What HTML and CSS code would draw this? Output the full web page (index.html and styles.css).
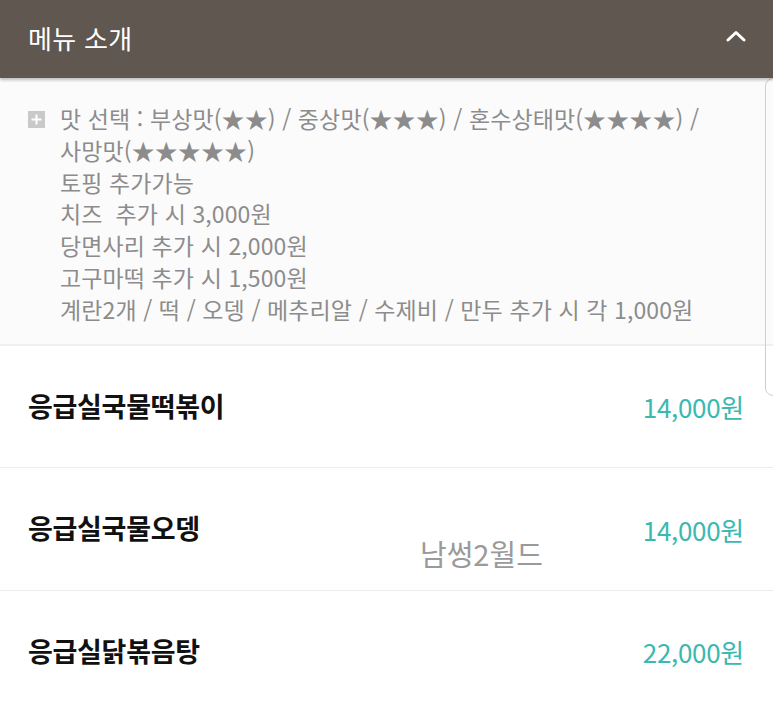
FILE: index.html
```html
<!DOCTYPE html>
<html lang="ko">
<head>
<meta charset="utf-8">
<link rel="stylesheet" href="styles.css">
</head>
<body>
<div class="page">
  <header class="bar">
    <span class="bar-title">메뉴 소개</span>
    <svg class="chev" width="20" height="12" viewBox="0 0 20 12"><path d="M2 10 L10 2.5 L18 10" fill="none" stroke="#fff" stroke-width="3" stroke-linecap="round" stroke-linejoin="round"/></svg>
  </header>
  <section class="desc">
    <div class="desc-row">
      <span class="plus"><svg width="17" height="17" viewBox="0 0 17 17"><rect width="17" height="17" fill="#c9c9c9"/><path d="M8.5 3.5 V13.5 M3.5 8.5 H13.5" stroke="#fff" stroke-width="2"/></svg></span>
      <div class="desc-text">
        <p>맛 선택 : 부상맛(★★) / 중상맛(★★★) / 혼수상태맛(★★★★) /<br>사망맛(★★★★★)</p>
        <p>토핑 추가가능</p>
        <p>치즈&nbsp; 추가 시 3,000원</p>
        <p>당면사리 추가 시 2,000원</p>
        <p>고구마떡 추가 시 1,500원</p>
        <p>계란2개 / 떡 / 오뎅 / 메추리알 / 수제비 / 만두 추가 시 각 1,000원</p>
      </div>
    </div>
  </section>
  <ul class="items">
    <li class="item"><span class="name">응급실국물떡볶이</span><span class="price">14,000원</span></li>
    <li class="item item-2"><span class="name">응급실국물오뎅</span><span class="price">14,000원</span></li>
    <li class="item"><span class="name">응급실닭볶음탕</span><span class="price">22,000원</span></li>
  </ul>
  <div class="watermark">남썽2월드</div>
  <div class="edge"></div>
</div>
</body>
</html>
```
FILE: styles.css
```css
* { box-sizing: border-box; }
html, body { margin: 0; padding: 0; background: #fff; }
body { font-family: "Noto Sans CJK KR", "Noto Sans", sans-serif; }
.page { position: relative; width: 773px; height: 706px; overflow: hidden; background: #fff; }
.bar {
  height: 78px;
  background: #5f5750;
  display: flex;
  align-items: center;
  justify-content: space-between;
  padding: 0 27px 0 28px;
  box-shadow: 0 2px 3px rgba(0,0,0,0.25);
  position: relative;
  z-index: 2;
}
.bar-title { color: #fff; font-size: 26px; letter-spacing: 0.3px; line-height: 1; margin-top: -2px; }
.chev { display: block; margin-top: -6px; }
.desc {
  background: #fbfbfb;
  padding: 25px 0 0 28px;
  height: 268px;
  border-bottom: 2px solid #efefef;
}
.desc-row { display: flex; gap: 15px; }
.plus { padding-top: 8px; }
.plus svg { display: block; }
.desc-text { color: #8c8c8c; font-size: 23px; line-height: 31.8px; letter-spacing: 0.1px; }
.desc-text p { margin: 0; }
.items { list-style: none; margin: 0; padding: 0; }
.item {
  height: 122px;
  display: flex;
  align-items: center;
  justify-content: space-between;
  padding: 0 29px 0 28px;
  border-bottom: 1px solid #ececec;
}
.item-2 { height: 123px; }
.name { font-size: 27px; font-weight: 700; color: #111; letter-spacing: -0.3px; margin-top: -3px; }
.price { font-size: 26px; color: #3bb9b1; letter-spacing: -0.3px; }
.watermark {
  position: absolute;
  left: 420px;
  top: 532px;
  font-size: 29px;
  color: #9a9a9a;
  letter-spacing: 0px;
}
.edge {
  position: absolute;
  left: 765px;
  top: 78px;
  width: 20px;
  height: 318px;
  border: 1px solid #cfcfcf;
  border-radius: 8px;
}
```
